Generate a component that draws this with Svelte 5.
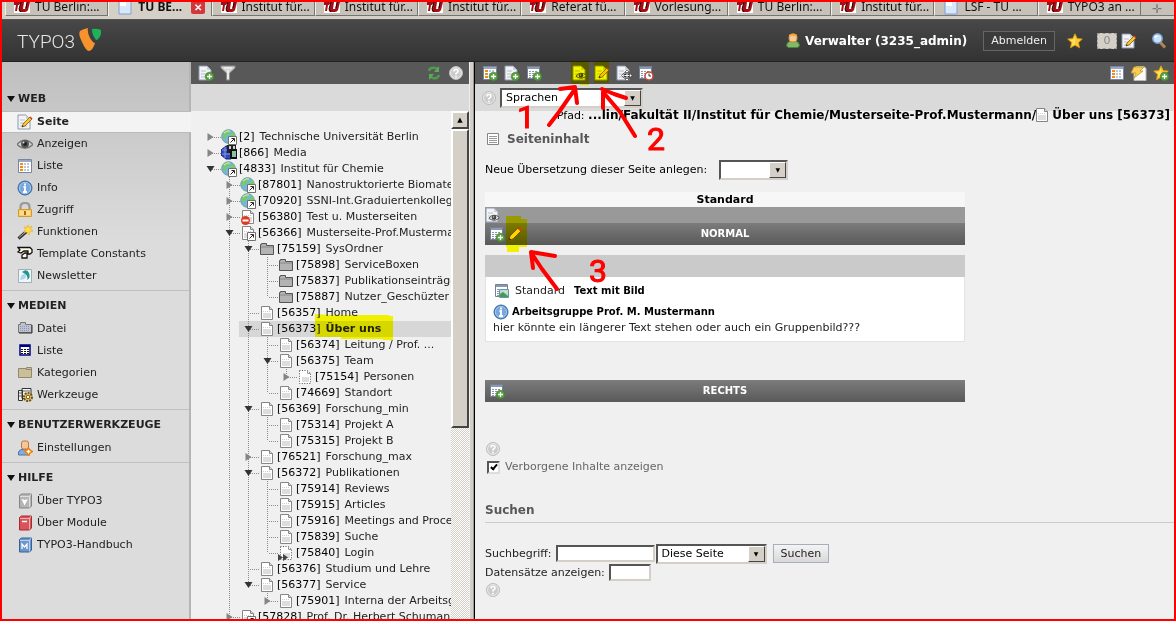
<script>
  const tabs = [
    { label: 'TU Berlin:...', icon: 'tu' },
    { label: 'TU BE...', icon: 'doc', active: true },
    { label: 'Institut für...', icon: 'tu' },
    { label: 'Institut für...', icon: 'tu' },
    { label: 'Institut für...', icon: 'tu' },
    { label: 'Referat fü...', icon: 'tu' },
    { label: 'Vorlesung...', icon: 'tu' },
    { label: 'TU Berlin:...', icon: 'tu' },
    { label: 'Institut für...', icon: 'tu' },
    { label: 'LSF - TU ...', icon: 'doc' },
    { label: 'TYPO3 an ...', icon: 'tu' }
  ];

  const menu = [
    {
      title: 'WEB',
      items: [
        ['Seite', 'edit'],
        ['Anzeigen', 'eye'],
        ['Liste', 'list'],
        ['Info', 'info'],
        ['Zugriff', 'lock'],
        ['Funktionen', 'wand'],
        ['Template Constants', 'template'],
        ['Newsletter', 'news']
      ]
    },
    {
      title: 'MEDIEN',
      items: [
        ['Datei', 'files'],
        ['Liste', 'calendar'],
        ['Kategorien', 'category'],
        ['Werkzeuge', 'tools']
      ]
    },
    { title: 'BENUTZERWERKZEUGE', items: [['Einstellungen', 'settings']] },
    {
      title: 'HILFE',
      items: [
        ['Über TYPO3', 'bookGrey'],
        ['Über Module', 'bookRed'],
        ['TYPO3-Handbuch', 'bookBlue']
      ]
    }
  ];

  // level, id, title, icon, state of the expander (+ closed, - open)
  const rows = [
    [0, '2', 'Technische Universität Berlin', 'globe', '+'],
    [0, '866', 'Media', 'media', '+'],
    [0, '4833', 'Institut für Chemie', 'globe', '-'],
    [1, '87801', 'Nanostruktorierte Biomaterialien', 'globe', '+'],
    [1, '70920', 'SSNI-Int.Graduiertenkolleg', 'globe', '+'],
    [1, '56380', 'Test u. Musterseiten', 'pageStop', '+'],
    [1, '56366', 'Musterseite-Prof.Mustermann', 'pageLink', '-'],
    [2, '75159', 'SysOrdner', 'folder', '-'],
    [3, '75898', 'ServiceBoxen', 'folder', ''],
    [3, '75837', 'Publikationseinträge', 'folder', ''],
    [3, '75887', 'Nutzer_Geschüzter', 'folder', ''],
    [2, '56357', 'Home', 'page', ''],
    [2, '56373', 'Über uns', 'page', '-'],
    [3, '56374', 'Leitung / Prof. ...', 'page', ''],
    [3, '56375', 'Team', 'page', '-'],
    [4, '75154', 'Personen', 'pageHidden', '+'],
    [3, '74669', 'Standort', 'page', ''],
    [2, '56369', 'Forschung_min', 'page', '-'],
    [3, '75314', 'Projekt A', 'page', ''],
    [3, '75315', 'Projekt B', 'page', ''],
    [2, '76521', 'Forschung_max', 'page', '+'],
    [2, '56372', 'Publikationen', 'page', '-'],
    [3, '75914', 'Reviews', 'page', ''],
    [3, '75915', 'Articles', 'page', ''],
    [3, '75916', 'Meetings and Proceedings', 'page', ''],
    [3, '75839', 'Suche', 'page', ''],
    [3, '75840', 'Login', 'pageShortcut', ''],
    [2, '56376', 'Studium und Lehre', 'page', ''],
    [2, '56377', 'Service', 'page', '-'],
    [3, '75901', 'Interna der Arbeitsgruppe', 'page', '+'],
    [1, '57828', 'Prof. Dr. Herbert Schumann', 'pageLink', '+']
  ].map(([level, id, title, icon, state]) => ({ level, id, title, icon, state }));

  let selected = $state('56373');
  let module = $state('Seite');
  let showHidden = $state(true);

  // true if the branch at this level goes on below row i
  function goesOn(i, level) {
    if (i === rows.length - 1) return level === 1;
    const next = rows.slice(i + 1).find((r) => r.level <= level);
    return !!next && next.level === level;
  }

  function guides(i) {
    const { level } = rows[i];
    const lines = [];
    for (let k = 1; k < level; k++) {
      if (goesOn(i, k)) lines.push([k * 19 + 9.5, 0, k * 19 + 9.5, 16]);
    }
    const x = level * 19 + 9.5;
    if (level > 0) lines.push([x, 0, x, goesOn(i, level) ? 16 : 8]);
    lines.push([x + 1, 8.5, x + 11, 8.5]);
    return lines;
  }

  const page = '<path d="M2.5 1.5h8l3 3v10h-11z" fill="#fff" stroke="#858585"/><path d="M10.500 1.500v3h3" fill="#ddd" stroke="#858585"/><path d="M4 8h8v5H4z" fill="#ddd"/><path d="M4 6.500h8" stroke="#ccc" stroke-dasharray="1 1"/>';
  const dashed = '<path d="M2.5 1.5h8l3 3v10h-11z" fill="#fff" stroke="#555" stroke-dasharray="1 1.500"/><path d="M10.500 1.500v3h3" fill="none" stroke="#999"/><path d="M5 8h7v5H5z" fill="#ddd"/>';
  const plainPage = '<path d="M1 1h8l4 4v10H1z" fill="#f3f3f5" stroke="#8b98b0"/><path d="M9 1v4h4" fill="#ccd2dc"/><path d="M3 6h5M3 9h7M3 12h7" stroke="#b7bfca"/>';
  const table = '<path d="M1.500 1.500h12v12h-12z" fill="#fff" stroke="#73809a"/><path d="M2 3h11" stroke="#8c98ad" stroke-width="2"/><path d="M3 6.500h9M3 8.500h9M3 10.500h9M3 12.500h9" stroke="#8b96a8" stroke-dasharray="2 1"/>';
  const list = '<path d="M1.500 1.500h13v13h-13z" fill="#fff" stroke="#7885a0"/><path d="M2 3h12" stroke="#9aa7c0" stroke-width="2"/><path d="M3 6h3M3 9h3M3 12h3" stroke="#f28a16" stroke-width="2"/><path d="M7 6h6M7 9h6M7 12h6" stroke="#7e8ca8" stroke-dasharray="2 1"/>';
  const plus = '<circle cx="11.500" cy="11.500" r="4.300" fill="#559f3d" stroke="#3d7f2c" stroke-width=".6"/><path d="M11.500 9v5M9 11.500h5" stroke="#fff" stroke-width="1.300"/>';
  const pencil = '<path d="M5 13l1-3 7-7 2 2-7 7z" fill="#f9c62b" stroke="#7d5b12" stroke-width=".8"/><path d="M12.500 3.500l1-1 2 2-1 1z" fill="#d43b28"/><path d="M5 13l.6-1.700 1.200 1z" fill="#222"/>';
  const arrowBox = '<path d="M7.500 7.500h8v8h-8z" fill="#fff" stroke="#707070"/><path d="M9.500 13.500l3.500-3.500M10.500 9.500h3v3" stroke="#222" fill="none"/>';
  const star = '<path d="M8 .8l2.200 4.700 5.100.6-3.800 3.500 1 5.200L8 12.200l-4.500 2.600 1-5.200L.7 6.100l5.100-.6z" fill="#fccb30" stroke="#e39c12" stroke-width=".8"/><path d="M8 3v8l-3 1.500.8-3.500L3.500 7l3-.5z" fill="#fff08a" opacity=".6"/>';
  const book = (fill, dark) => `<path d="M2.500 2.500l2-1.500h10v12l-2 2h-10z" fill="${fill}" stroke="${dark}"/><path d="M3 3.500h9.500v11M14 1l-1.500 2.500" stroke="#fff" opacity=".55" fill="none"/>`;
  const bigEye = '<path d="M0 8.500Q8 0 16 8.500 8 16 0 8.500z" fill="#d5d5d5" stroke="#777" stroke-width="1.400"/><circle cx="8" cy="8" r="4" fill="#555"/><circle cx="8" cy="8" r="2" fill="#222"/><circle cx="6.500" cy="6.500" r="1" fill="#ddd"/>';
  const smallEye = '<path d="M4 11q4.500-5 10-1 .5 1-1 2-5 3-9-1z" fill="#e8e8e8" stroke="#555"/><circle cx="9" cy="10.500" r="2.300" fill="#444"/><circle cx="8.500" cy="10" r=".8" fill="#ccc"/>';
  const help = '<circle cx="8" cy="8" r="6.500" fill="#cbcbcb" stroke="#bdbdbd" stroke-width="1"/><circle cx="8" cy="8" r="5.400" fill="none" stroke="#ededed"/><path d="M6 6.500q0-2 2-2t2 1.800q0 1.200-2 2.200v1M8 10.800v1.400" fill="none" stroke="#fff" stroke-width="1.700"/>';

  const icons = {
    page,
    pageHidden: dashed,
    pageShortcut: dashed + '<path d="M0 9l5 3.500L0 16zM5 9l5 3.500L5 16z" fill="#444"/>',
    pageLink: page + arrowBox,
    pageStop: page + '<circle cx="5.500" cy="11.500" r="4.500" fill="#dd3c20"/><path d="M2.500 11.500h6" stroke="#fff" stroke-width="2"/>',
    globe: '<circle cx="7.500" cy="7.500" r="6.800" fill="#72b7de" stroke="#739b94"/><path d="M2 4q4-4 6-2 2 2-1 4-2 1-3 4-3-2-2-6zM9 6l4-3q2 3 1 6l-4 3-2-3z" fill="#77ca68"/><path d="M3 4q3-3 6-2" stroke="#d5f0d0" fill="none"/>' + arrowBox,
    media: '<path d="M0 5l5-4h5v13H5L0 10z" fill="#3149c0" stroke="#172174"/><path d="M1 5h8M1 9h8M4 2v11" stroke="#8795e5"/><path d="M6 0h9v8H6z" fill="#222"/><path d="M8 1h2v3H8zM12 1h2v3h-2z" fill="#ccc"/><path d="M9 4h7v10H9z" fill="#111"/><path d="M11 6h4v6h-4z" fill="#86c2a5"/>',
    folder: '<path d="M1.500 3.500h1v-1h5v2h7v9h-13z" fill="#b3b3b3" stroke="#555"/><path d="M2 6h12" stroke="#8a8a8a"/>',
    list,
    listNew: list + plus,
    pageNew: plainPage + plus,
    tableNew: table + plus,
    tableTime: table + '<circle cx="11" cy="11" r="4" fill="#fff" stroke="#ce4637" stroke-width="1.500"/><path d="M11 8.500V11h2" stroke="#333" fill="none"/>',
    pageMove: plainPage + '<path d="M11 6v9M6.500 10.500h9" stroke="#333" stroke-width="3"/><path d="M11 6.500v8M7 10.500h8" stroke="#fff"/><path d="M11 5l2.500 2.500h-5zM11 16l2.500-2.500h-5zM5.500 10.500l2.500-2.500v5zM16 10.500l-2.500-2.500v5z" fill="#fff" stroke="#333" stroke-width=".6"/>',
    pageView: plainPage + smallEye,
    edit: plainPage + pencil,
    pencil: '<path d="M2 14l1-4 8-8q3 0 3 3l-8 8z" fill="#ffd53c" stroke="#80540a"/><path d="M10.500 2.500l1-1q3 0 3 3l-1 1z" fill="#dd3a20"/><path d="M2 14l.5-2 1.500 1.500z" fill="#222"/>',
    eye: bigEye,
    info: '<circle cx="8" cy="8" r="7" fill="#5a91cc" stroke="#396ba5"/><circle cx="8" cy="8" r="5.600" fill="#78a8db" stroke="#a6c7ec"/><path d="M8 3.500v2M6.500 7H8v5M6 12h4" stroke="#fff" stroke-width="1.800" fill="none"/>',
    lock: '<path d="M3.500 8V5q0-4 4.500-4t4.500 4v3" fill="none" stroke="#999" stroke-width="2.200"/><path d="M1.500 7.500h13v7h-13z" fill="#f9cd69" stroke="#d9982c"/><path d="M3 10h4M3 12h4M9 10h4M9 12h4" stroke="#fff0b0"/><path d="M8 9v4" stroke="#a26c1b" stroke-width="2"/>',
    wand: '<path d="M1.500 14.500l8-7" stroke="#333" stroke-width="3"/><path d="M2 13.500l6-5" stroke="#aaa"/><path d="M11 1l1 2.500L15 2l-1.500 3L16 7l-3 .5L12 11l-2-3-3 .5 1.500-3L7 3l3 .5z" fill="#ffdd45" stroke="#edaf29" stroke-width=".7"/>',
    template: '<path d="M1 1.500h12l2 2v3l-2 1.500h-3v4H5V9l3-2h3V5H7L4 7 1 6l2-2z" fill="#fffbe6" stroke="#111" stroke-width="1.300"/>',
    news: '<path d="M1.500 1.500h13v13h-13z" fill="#f3f6f7" stroke="#9eafb8"/><path d="M5 4q5-4 7 1t-2 7q2-5-5-8z" fill="#19988b"/><path d="M3 12q1-7 5-6 4 5-5 6z" fill="#aed5f0"/>',
    files: '<path d="M1.500 3.500h2v-2h5v2h6v8h-13z" fill="#bfc3d0" stroke="#777"/><path d="M3 5.500h10M3 7.500h10M3 9.500h10" stroke="#8d96b8" stroke-dasharray="1 1"/><path d="M2 12h13V4" fill="none" stroke="#333"/>',
    calendar: '<path d="M3 2h10v10H3z" fill="#fff" stroke="#000080" stroke-width="1.500"/><path d="M3 3h10" stroke="#000080" stroke-width="2"/><path d="M4 6.500h8M4 8.500h8M4 10.500h8" stroke="#111" stroke-dasharray="2 1"/>',
    category: '<path d="M1.500 3.500h8v-1h5v10h-13z" fill="#c9bf9b" stroke="#928968"/><path d="M9 4.500h5" stroke="#928968"/>',
    tools: '<path d="M1.500 3.500h4v10h-4zM5 1.500h9v10H5z" fill="#f2f2f2" stroke="#333"/><path d="M2 6h3M2 9h3M6 4h7" stroke="#666"/><circle cx="11" cy="10" r="4" fill="#f0cb67" stroke="#6d5316" stroke-width="2" stroke-dasharray="2 1"/><circle cx="11" cy="10" r="1.800" fill="#fff" stroke="#6d5316"/>',
    settings: '<path d="M1.500 15v-3q1-3 6-3t5 3v3z" fill="#83ade0" stroke="#4a76a9"/><rect x="4.500" y="1" width="7" height="8" rx="2" fill="#f7c596" stroke="#b7784a"/><path d="M11.500 8l1.300 2 2.700 1.500-2.700 1.500-1.300 3-1.300-3-2.700-1.500 2.700-1.500z" fill="#fff" stroke="#ee830b" stroke-width="1.500"/>',
    bookGrey: book('#b5b5b5', '#858585') + '<path d="M4.500 6l3 6.500L11 6 8 7z" fill="#fff"/>',
    bookRed: book('#d95358', '#a82a2f') + '<path d="M5 6.500h5" stroke="#fff" stroke-width="1.500"/>',
    bookBlue: book('#6997cd', '#386196') + '<path d="M5 12V7l2.500 3L10 7v5" stroke="#fff" stroke-width="1.300" fill="none"/>',
    filter: '<path d="M1 1h14v2L9.500 8v7h-3V8L1 3z" fill="#d4d4d4" stroke="#8c8c8c"/><path d="M4 3h8M8 5v9" stroke="#fff"/>',
    refresh: '<path d="M3 6q1-4 6-3l3 1M13 10q-1 4-6 3l-3-1" stroke="#4e9b4e" stroke-width="2.500" fill="none"/><path d="M13 1v6H8zM3 15V9h5z" fill="#5aad57"/>',
    help,
    content: '<path d="M2.500 2.500h11v11h-11z" fill="#fff" stroke="#858585"/><path d="M4 5.500h8M4 7.500h8M4 9.500h8M4 11.500h8" stroke="#999"/>',
    image: table + '<path d="M5.500 6.500h9v8h-9z" fill="#aaddf5" stroke="#6897ad"/><path d="M6 14v-3l3-2 5 4v1z" fill="#4b9a45"/><circle cx="12" cy="8.500" r="1.200" fill="#ffe15c"/>',
    user: '<path d="M1.500 13q0-4 4-5h5q4 1 4 5l-2 1.500h-9z" fill="#82b869" stroke="#4f8438"/><rect x="4" y="1" width="8" height="8" rx="3" fill="#f6ca94" stroke="#c28136"/><path d="M4 5V2q4-3 8 0v3l-2-2H6z" fill="#efaa38"/>',
    star,
    starNew: star + plus,
    search: '<path d="M9 9l5 5.500" stroke="#b78250" stroke-width="3"/><circle cx="6.500" cy="5.500" r="4.700" fill="#c7e2fa" stroke="#7e9fcb" stroke-width="1.500"/><path d="M4 5q0-2 2.500-2" stroke="#fff" stroke-width="1.500" fill="none"/>',
    flash: '<path d="M5 1.500h8l2 2v12H3V8z" fill="#fafafa" stroke="#b9b9b9"/><path d="M3 2h10L9 6h3L3 13l2-5H0z" fill="#f9cf51" stroke="#cb9a25" stroke-width=".8"/>',
    tu: '<path d="M0 2h16v12H0z" fill="#fff"/><path d="M0 3h7L5 6H4l-1 6H1l1-6H0zM7 3h3l-1 7h2l2-7h3l-2 8q-1 2-3 2H7q-3 0-2-3z" fill="#a30d13"/><path d="M7 3l-2 7 2 3M13 3l-1 6" stroke="#240506" fill="none"/>',
    doc: '<path d="M2 0h9l3 3v12H2z" fill="#d8e8fc" stroke="#7e9fcd"/><path d="M3 1h6v6H3z" fill="#fff"/>'
  };
</script>

{#snippet icon(name)}
  <svg class="icon" viewBox="0 0 16 16" aria-hidden="true">{@html icons[name]}</svg>
{/snippet}

{#snippet tool(name, label)}
  <button class="tool" aria-label={label}>{@render icon(name)}</button>
{/snippet}

<div class="window">
  <nav class="tabs" aria-label="Tabs">
    {#each tabs as tab}
      <a href="#tab" class="tab" class:active={tab.active}>
        {@render icon(tab.icon)}
        <span>{tab.label}</span>
        {#if tab.active}<span class="close">✕</span>{/if}
      </a>
    {/each}
    <button class="newtab" aria-label="Neuer Tab">✛</button>
  </nav>

  <header>
    <a href="#home" class="logo">
      <span>TYPO3</span>
      <svg viewBox="0 0 22 23" aria-hidden="true">
        <path d="M1 3Q4 1 9 0 8 4 11 10q3 5 5 5-2 7-6 8-3 0-7-9Q-1 6 1 3z" fill="#f7932d" />
        <path d="M13 1q5-1 9 1 1 4-2 8-1 2-3 2-4-5-4-11z" fill="#1eb25a" />
      </svg>
    </a>
    <div class="account">
      {@render icon('user')}
      <strong>Verwalter (3235_admin)</strong>
      <button class="logout">Abmelden</button>
      {@render tool('star', 'Lesezeichen')}
      <span class="workspace"><span class="count">0</span>{@render tool('edit', 'Dokumente')}</span>
      {@render tool('search', 'Suche')}
    </div>
  </header>

  <div class="panes">
    <nav class="menu" aria-label="Module">
      {#each menu as group}
        <section>
          <h2>{group.title}</h2>
          <ul>
            {#each group.items as [label, name]}
              <li>
                <a
                  href="#module"
                  class:active={module === label}
                  onclick={() => (module = label)}
                >{@render icon(name)}{label}</a>
              </li>
            {/each}
          </ul>
        </section>
      {/each}
    </nav>

    <div class="treepane">
      <div class="toolbar">
        {@render tool('pageNew', 'Neue Seite')}
        {@render tool('filter', 'Filter')}
        <span class="space"></span>
        {@render tool('refresh', 'Aktualisieren')}
        {@render tool('help', 'Hilfe')}
      </div>
      <div class="subbar"></div>
      <div class="treebox">
        <ul class="tree">
          {#each rows as row, i}
            <li class:selected={row.id === selected} style:--level={row.level}>
              <svg class="guides" width={(row.level + 1) * 19 + 2} height="16" aria-hidden="true">
                {#each guides(i) as [x1, y1, x2, y2]}
                  <line {x1} {y1} {x2} {y2} />
                {/each}
                {#if row.state}
                  <g transform="translate({row.level * 19 + 9.5} 8)">
                    {#if row.state === '+'}
                      <path class="closed" d="M-3-4v8l6-4z" />
                    {:else}
                      <path class="open" d="M-4-3h8l-4 6z" />
                    {/if}
                  </g>
                {/if}
              </svg>
              <a href="#page" onclick={() => (selected = row.id)}>
                {@render icon(row.icon)}<span class="id">[{row.id}]</span>
                <span class="title">{row.title}</span>
              </a>
            </li>
          {/each}
        </ul>
        <div class="scrollbar">
          <button aria-label="Nach oben">▲</button>
          <div class="thumb"></div>
        </div>
      </div>
    </div>

    <div class="splitter"></div>

    <main>
      <div class="toolbar">
        {@render tool('listNew', 'Neuer Datensatz')}
        {@render tool('pageNew', 'Neue Seite')}
        {@render tool('tableNew', 'Neuer Inhalt')}
        <span class="gap"></span>
        {@render tool('pageView', 'Seite anzeigen')}
        {@render tool('edit', 'Seite bearbeiten')}
        {@render tool('pageMove', 'Seite verschieben')}
        {@render tool('tableTime', 'Verlauf')}
        <span class="space"></span>
        {@render tool('list', 'Liste')}
        {@render tool('flash', 'Cache leeren')}
        {@render tool('starNew', 'Lesezeichen anlegen')}
      </div>
      <div class="subbar languages">
        {@render icon('help')}
        <span class="select wide">
          <select aria-label="Sprachen"><option>Sprachen</option></select>
        </span>
      </div>
      <div class="path">
        <span>Pfad:</span> <strong>...lin/Fakultät II/Institut für Chemie/Musterseite-Prof.Mustermann/{@render icon('page')} Über uns [56373]</strong>
      </div>

      <div class="content">
        <h1>{@render icon('content')}Seiteninhalt</h1>
        <div class="translate">
          <label for="lang">Neue Übersetzung dieser Seite anlegen:</label>
          <span class="select small"><select id="lang"><option></option></select></span>
        </div>

        <div class="column">
          <h3>Standard</h3>
          <div class="viewbar">{@render icon('pageView')}</div>
          <div class="bar">
            {@render tool('tableNew', 'Neuer Inhalt')}
            {@render tool('pencil', 'Bearbeiten')}
            <h4>NORMAL</h4>
          </div>
          <article>
            <div class="grip"></div>
            <p class="kind">{@render icon('image')}<span>Standard</span><strong>Text mit Bild</strong></p>
            <p class="name">{@render icon('info')}<strong>Arbeitsgruppe Prof. M. Mustermann</strong></p>
            <p>hier könnte ein längerer Text stehen oder auch ein Gruppenbild???</p>
          </article>
          <div class="bar">
            {@render tool('tableNew', 'Neuer Inhalt')}
            <h4>RECHTS</h4>
          </div>
        </div>

        <div class="hidden">
          {@render icon('help')}
          <label><input type="checkbox" bind:checked={showHidden} />Verborgene Inhalte anzeigen</label>
        </div>

        <h2>Suchen</h2>
        <form onsubmit={(e) => e.preventDefault()}>
          <div class="field">
            <label for="term">Suchbegriff:</label>
            <input id="term" type="text" class="term" />
            <span class="select scope">
              <select aria-label="Suchbereich"><option>Diese Seite</option></select>
            </span>
            <button class="submit">Suchen</button>
          </div>
          <div class="field">
            <label for="limit">Datensätze anzeigen:</label>
            <input id="limit" type="text" class="limit" />
          </div>
          {@render icon('help')}
        </form>
      </div>
    </main>
  </div>

  <svg class="marker" width="680" height="350" aria-hidden="true">
    <path d="M571 61h18v24h-9v-1h-9zM594 61h15v22h-15z" />
    <path d="M506 216h15v3h6v28h-8v5h-12v-5h-1z" />
    <path d="M315 314l14 1h60v1h4v24h-10v-1h-42v-2h-26z" />
  </svg>
  <svg class="pen" width="680" height="350" aria-hidden="true">
    <path d="M549 125l10-13 16-23M560 89l15-2 2 16M635 136l-15-24-17-20v16M602 89l12 5 12 4M557 289l-15-20-10-15M555 256l-24-4 2 16" />
    <text x="517" y="128">1</text>
    <text x="647" y="150">2</text>
    <text x="589" y="282">3</text>
  </svg>
</div>

<style>
  :global(body) {
    background: #f0f0f0;
  }

  .window {
    position: relative;
    box-sizing: border-box;
    height: 100vh;
    border: 2px solid #f00;
    display: flex;
    flex-direction: column;
    overflow: hidden;
    font-family: Verdana, "DejaVu Sans", sans-serif;
    font-size: 11px;
    line-height: 16px;
    color: #222;
  }

  h1, h2, h3, h4, p, ul {
    margin: 0;
    padding: 0;
    font-size: 11px;
    list-style: none;
  }

  a {
    color: inherit;
    text-decoration: none;
  }

  button, input, select {
    font: inherit;
    color: inherit;
    margin: 0;
    box-sizing: border-box;
  }

  .icon {
    width: 16px;
    height: 16px;
    flex: none;
    display: block;
  }

  .tool {
    display: block;
    padding: 0;
    border: 0;
    background: none;
    cursor: pointer;
  }

  /* browser tabs */
  .tabs {
    display: flex;
    height: 17px;
    flex: none;
    padding-left: 3px;
    background: #d4d0c8;
    border-bottom: 1px solid #555;
    font-family: Tahoma, "Noto Sans", sans-serif;
    font-size: 12px;
    color: #111;
    overflow: hidden;
  }

  .tab {
    flex: 1;
    min-width: 0;
    height: 14px;
    box-sizing: border-box;
    display: flex;
    align-items: center;
    gap: 5px;
    padding-left: 8px;
    padding-bottom: 4px;
    background: #c6c2ba;
    border-left: 1px solid #f2f0ec;
    border-right: 1px solid #77746f;
    border-bottom: 1px solid #77746f;
    white-space: nowrap;
  }

  .tab.active {
    background: #d4d0c8;
    border-bottom: 0;
    font-weight: bold;
  }

  .close {
    width: 14px;
    height: 14px;
    margin-left: auto;
    margin-right: 6px;
    border-radius: 2px;
    background: #d4373b;
    color: #fff;
    font-size: 10px;
    line-height: 14px;
    text-align: center;
  }

  .newtab {
    width: 33px;
    height: 14px;
    padding: 0;
    border: 0;
    border-bottom: 1px solid #77746f;
    background: #c6c2ba;
    color: #777;
    line-height: 8px;
  }

  header {
    display: flex;
    align-items: center;
    justify-content: space-between;
    height: 42px;
    flex: none;
    box-sizing: border-box;
    padding: 0 7px 0 15px;
    background: linear-gradient(#484848, #333);
    border-bottom: 1px solid #222;
  }

  .logo {
    display: flex;
    align-items: center;
    gap: 4px;
    padding-top: 2px;
    color: #e6e6e6;
    font: 300 19px/24px Roboto, sans-serif;
  }

  .logo svg {
    width: 22px;
    height: 23px;
    margin-bottom: 4px;
  }

  .account {
    display: flex;
    align-items: center;
    color: #fff;
  }

  .account strong {
    margin: 0 16px 0 4px;
    font-size: 12px;
  }

  .logout {
    height: 20px;
    margin-right: 12px;
    padding: 0 7px;
    border: 1px solid #666;
    background: #3b3b3b;
    color: #eee;
  }

  .workspace {
    display: flex;
    gap: 4px;
    margin: 0 14px;
  }

  .count {
    box-sizing: border-box;
    width: 20px;
    height: 16px;
    border: 1px dashed #999;
    background: #d4d0c8;
    color: #888;
    line-height: 14px;
    text-align: center;
  }

  .panes {
    flex: 1;
    min-height: 0;
    display: flex;
  }

  /* module menu */
  .menu {
    width: 189px;
    flex: none;
    box-sizing: border-box;
    padding-top: 23px;
    background: linear-gradient(#bfbfbf, #dcdcdc 180px);
    border-right: 2px solid #b5b5b5;
  }

  .menu section {
    padding-bottom: 3px;
    border-bottom: 1px solid #c0c0c0;
  }

  .menu section:last-child {
    border-bottom: 0;
  }

  .menu h2 {
    display: flex;
    align-items: center;
    gap: 3px;
    height: 27px;
    box-sizing: border-box;
    padding: 2px 0 0 5px;
  }

  .menu section:first-child h2 {
    height: 26px;
  }

  .menu h2::before {
    content: "";
    border: 4px solid transparent;
    border-top: 6px solid #111;
    border-bottom: 0;
  }

  .menu li a {
    display: flex;
    align-items: center;
    gap: 4px;
    height: 22px;
    box-sizing: border-box;
    padding-left: 15px;
  }

  .menu li a.active {
    margin-right: -2px;
    background: #f3f3f3;
    border-top: 1px solid #bababa;
    border-bottom: 1px solid #bababa;
    font-weight: bold;
  }

  /* toolbars */
  .toolbar {
    display: flex;
    align-items: center;
    gap: 6px;
    height: 22px;
    flex: none;
    padding: 0 5px 0 7px;
    background: #585858;
  }

  .gap {
    width: 18px;
  }

  .space {
    flex: 1;
  }

  .subbar {
    height: 27px;
    flex: none;
    background: #dadada;
  }

  /* page tree */
  .treepane {
    width: 278px;
    flex: none;
    display: flex;
    flex-direction: column;
  }

  .treebox {
    flex: 1;
    min-height: 0;
    display: flex;
    overflow: hidden;
  }

  .tree {
    flex: 1;
    min-width: 0;
    padding-top: 18px;
    overflow: hidden;
  }

  .tree li {
    display: flex;
    height: 16px;
    padding-left: 10px;
    white-space: nowrap;
  }

  .tree li.selected {
    background: linear-gradient(#d7d7d7, #d7d7d7) calc(var(--level) * 19px + 10px) 0 no-repeat;
  }

  .tree li.selected .title {
    font-weight: bold;
  }

  .tree a {
    display: flex;
  }

  .tree .icon {
    margin-right: 2px;
  }

  .id {
    color: #000;
    margin-right: 5px;
  }

  .guides {
    flex: none;
    margin-right: -1px;
  }

  .guides line {
    stroke: #8c8c8c;
    stroke-dasharray: 1 1;
    shape-rendering: crispEdges;
  }

  .closed {
    fill: #858585;
  }

  .open {
    fill: #333;
  }

  .scrollbar {
    width: 18px;
    flex: none;
    display: flex;
    flex-direction: column;
    background: repeating-conic-gradient(#d4d0c8 0 25%, #fff 0 50%) 0 0 / 2px 2px;
  }

  .scrollbar button {
    height: 18px;
    padding: 0;
    font-size: 7px;
    line-height: 12px;
    color: #000;
  }

  .scrollbar button,
  .thumb {
    background: #d4d0c8;
    border: 2px solid;
    border-color: #fff #444 #444 #fff;
  }

  .thumb {
    height: 58%;
  }

  .splitter {
    width: 6px;
    flex: none;
    box-sizing: border-box;
    background: #d4d0c8;
    border-left: 1px solid #eee;
    border-right: 1px solid #000;
    box-shadow: inset -1px 0 #999;
  }

  main {
    flex: 1;
    min-width: 0;
    display: flex;
    flex-direction: column;
    color: #000;
  }

  .languages {
    display: flex;
    align-items: center;
    gap: 3px;
    padding-left: 6px;
  }

  .select {
    position: relative;
    display: inline-block;
    height: 20px;
  }

  .select select {
    display: block;
    width: 100%;
    height: 20px;
    padding: 0 4px;
    appearance: none;
    background: #fff;
    border: 2px solid;
    border-color: #555 #d4d0c8 #d4d0c8 #555;
    border-radius: 0;
    color: #000;
  }

  .select::after {
    content: "▼";
    position: absolute;
    top: 2px;
    right: 2px;
    box-sizing: border-box;
    width: 17px;
    height: 16px;
    border: 1px solid;
    border-color: #fff #444 #444 #fff;
    background: #d4d0c8;
    color: #000;
    font-size: 6px;
    line-height: 14px;
    text-align: center;
    pointer-events: none;
  }

  .wide {
    width: 143px;
  }

  .small {
    width: 69px;
  }

  .path {
    position: relative;
    margin-top: -4px;
    padding-right: 4px;
    text-align: right;
    white-space: nowrap;
  }

  .path strong {
    font-size: 12px;
  }

  .path .icon {
    display: inline-block;
    vertical-align: -4px;
    margin: 0 -2px;
  }

  .content {
    padding: 5px 0 0 10px;
  }

  h1 {
    display: flex;
    align-items: center;
    gap: 6px;
    height: 20px;
    font-size: 12px;
    color: #585858;
  }

  .translate {
    display: flex;
    align-items: center;
    gap: 12px;
    margin-top: 11px;
  }

  .column {
    max-width: 480px;
    margin-top: 12px;
  }

  .column h3 {
    height: 15px;
    line-height: 15px;
    background: #f7f7f7;
    text-align: center;
  }

  .viewbar {
    height: 16px;
    background: #999;
  }

  .bar {
    position: relative;
    display: flex;
    align-items: center;
    gap: 2px;
    height: 22px;
    padding-left: 4px;
    background: linear-gradient(#7c7c7c, #595959);
    color: #fff;
  }

  .bar h4 {
    position: absolute;
    inset: 0;
    line-height: 22px;
    text-align: center;
    pointer-events: none;
    font-size: 10px;
  }

  article {
    margin: 10px 0 38px;
    padding-bottom: 5px;
    background: #fff;
    border: 1px solid #e3e3e3;
    border-top: 0;
    color: #222;
  }

  .grip {
    height: 22px;
    margin: 0 -1px 6px;
    background: #cacaca;
  }

  article p {
    padding-left: 7px;
  }

  article strong {
    font-size: 10px;
    color: #000;
  }

  article .kind {
    display: flex;
    gap: 5px;
    padding-left: 8px;
    margin-bottom: 5px;
  }

  .kind strong {
    margin-left: 4px;
  }

  article .name {
    display: flex;
    gap: 3px;
  }

  .hidden {
    margin-top: 39px;
    color: #666;
  }

  .hidden label {
    display: flex;
    align-items: center;
    gap: 5px;
    height: 20px;
  }

  input[type="checkbox"] {
    appearance: none;
    position: relative;
    width: 13px;
    height: 13px;
    margin-left: 2px;
    background: #fff;
    border: 2px solid;
    border-color: #555 #ddd #ddd #555;
  }

  input[type="checkbox"]:checked::after {
    content: "";
    position: absolute;
    left: 3px;
    top: 0;
    width: 2px;
    height: 5px;
    border: solid #000;
    border-width: 0 2px 2px 0;
    transform: rotate(40deg);
  }

  .content h2 {
    margin-top: 22px;
    padding: 3px 0 4px;
    border-bottom: 1px solid #ccc;
    font-size: 12px;
    color: #585858;
  }

  form {
    margin-top: 21px;
    color: #222;
  }

  .field {
    display: flex;
    align-items: center;
    height: 19px;
  }

  .field label {
    margin-right: 4px;
  }

  input[type="text"] {
    height: 17px;
    padding: 0 3px;
    border: 2px solid;
    border-color: #555 #d4d0c8 #d4d0c8 #555;
    background: #fff;
  }

  .term {
    width: 99px;
  }

  .limit {
    width: 42px;
  }

  .scope {
    width: 111px;
    margin: 0 6px 0 1px;
  }

  .submit {
    height: 19px;
    padding: 0 7px;
    border: 1px solid #a6adbd;
    background: linear-gradient(#f4f4f4, #d8d8d8);
  }

  /* hand-made notes over the page */
  .marker,
  .pen {
    position: absolute;
    left: -2px;
    top: -2px;
    pointer-events: none;
  }

  .marker {
    fill: #ff0;
    mix-blend-mode: multiply;
  }

  .pen path {
    fill: none;
    stroke: #f00;
    stroke-width: 4;
    stroke-linecap: round;
    stroke-linejoin: round;
  }

  .pen text {
    fill: #f00;
    stroke: #f00;
    stroke-width: 1;
    font: 32px Roboto, sans-serif;
  }
</style>
